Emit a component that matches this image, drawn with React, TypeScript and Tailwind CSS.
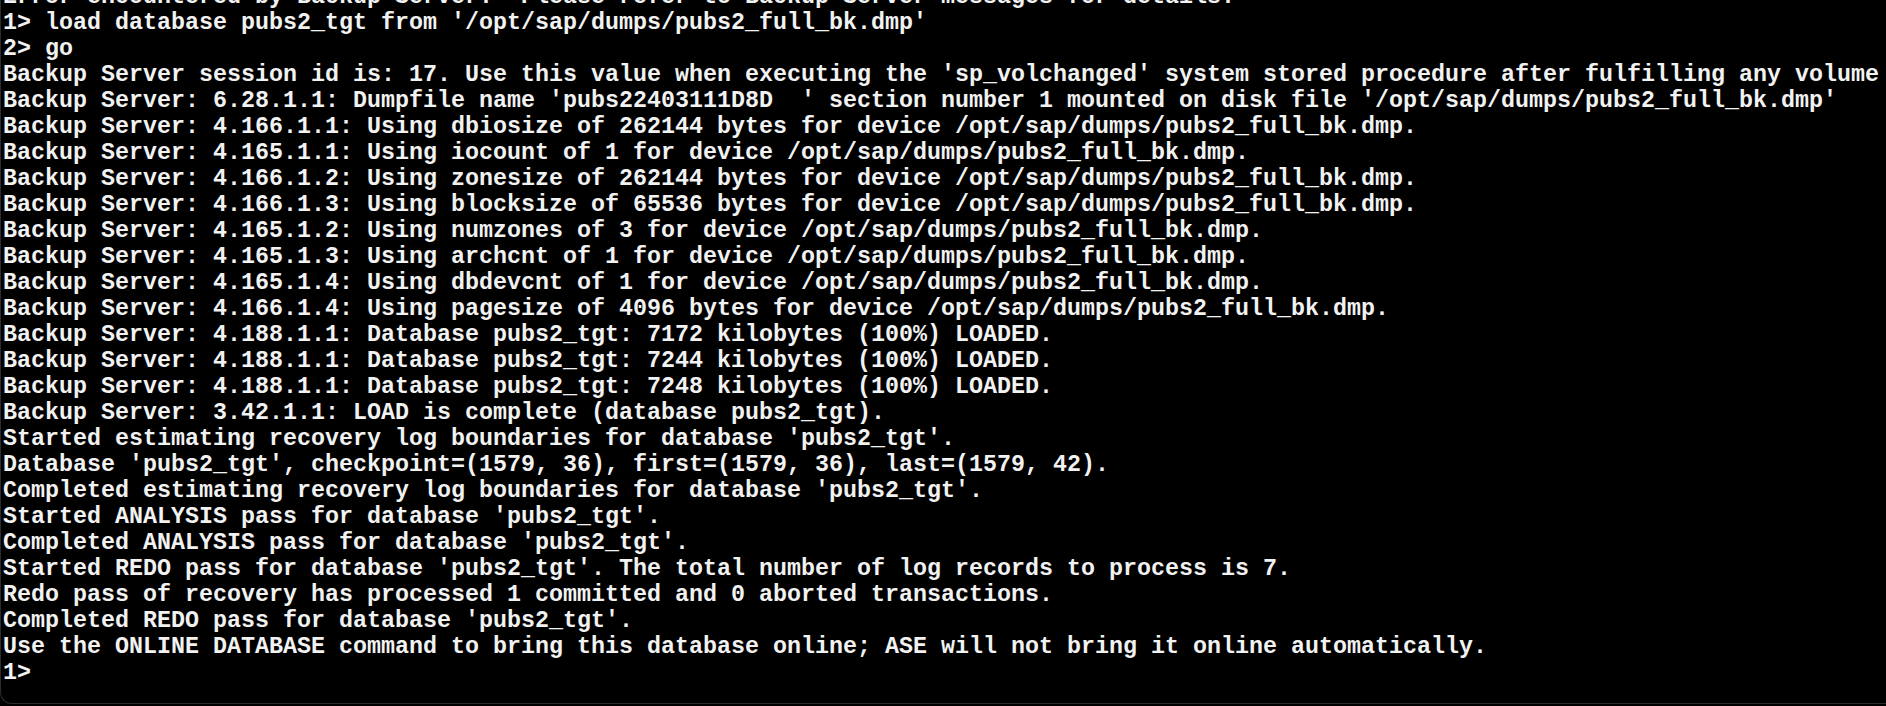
import React from "react";

const lines: string[] = [
  "Error encountered by Backup Server.  Please refer to Backup Server messages for details.",
  "1> load database pubs2_tgt from '/opt/sap/dumps/pubs2_full_bk.dmp'",
  "2> go",
  "Backup Server session id is: 17. Use this value when executing the 'sp_volchanged' system stored procedure after fulfilling any volume",
  "Backup Server: 6.28.1.1: Dumpfile name 'pubs22403111D8D  ' section number 1 mounted on disk file '/opt/sap/dumps/pubs2_full_bk.dmp'",
  "Backup Server: 4.166.1.1: Using dbiosize of 262144 bytes for device /opt/sap/dumps/pubs2_full_bk.dmp.",
  "Backup Server: 4.165.1.1: Using iocount of 1 for device /opt/sap/dumps/pubs2_full_bk.dmp.",
  "Backup Server: 4.166.1.2: Using zonesize of 262144 bytes for device /opt/sap/dumps/pubs2_full_bk.dmp.",
  "Backup Server: 4.166.1.3: Using blocksize of 65536 bytes for device /opt/sap/dumps/pubs2_full_bk.dmp.",
  "Backup Server: 4.165.1.2: Using numzones of 3 for device /opt/sap/dumps/pubs2_full_bk.dmp.",
  "Backup Server: 4.165.1.3: Using archcnt of 1 for device /opt/sap/dumps/pubs2_full_bk.dmp.",
  "Backup Server: 4.165.1.4: Using dbdevcnt of 1 for device /opt/sap/dumps/pubs2_full_bk.dmp.",
  "Backup Server: 4.166.1.4: Using pagesize of 4096 bytes for device /opt/sap/dumps/pubs2_full_bk.dmp.",
  "Backup Server: 4.188.1.1: Database pubs2_tgt: 7172 kilobytes (100%) LOADED.",
  "Backup Server: 4.188.1.1: Database pubs2_tgt: 7244 kilobytes (100%) LOADED.",
  "Backup Server: 4.188.1.1: Database pubs2_tgt: 7248 kilobytes (100%) LOADED.",
  "Backup Server: 3.42.1.1: LOAD is complete (database pubs2_tgt).",
  "Started estimating recovery log boundaries for database 'pubs2_tgt'.",
  "Database 'pubs2_tgt', checkpoint=(1579, 36), first=(1579, 36), last=(1579, 42).",
  "Completed estimating recovery log boundaries for database 'pubs2_tgt'.",
  "Started ANALYSIS pass for database 'pubs2_tgt'.",
  "Completed ANALYSIS pass for database 'pubs2_tgt'.",
  "Started REDO pass for database 'pubs2_tgt'. The total number of log records to process is 7.",
  "Redo pass of recovery has processed 1 committed and 0 aborted transactions.",
  "Completed REDO pass for database 'pubs2_tgt'.",
  "Use the ONLINE DATABASE command to bring this database online; ASE will not bring it online automatically.",
  "1>",
];

export default function App() {
  return (
    <div className="w-[1886px] h-[706px] bg-black overflow-hidden">
      <div className="h-[704px] border-b border-l border-[#2c2c2c] rounded-bl-[12px] overflow-hidden">
        <div
          className="-mt-[16px] pl-[2px] text-[23.33px] leading-[26px] text-[#f2f2f2] font-bold whitespace-pre"
          style={{ fontFamily: '"Liberation Mono", "Courier New", monospace' }}
        >
          {lines.map((l, i) => (
            <div key={i}>{l}</div>
          ))}
        </div>
      </div>
    </div>
  );
}
